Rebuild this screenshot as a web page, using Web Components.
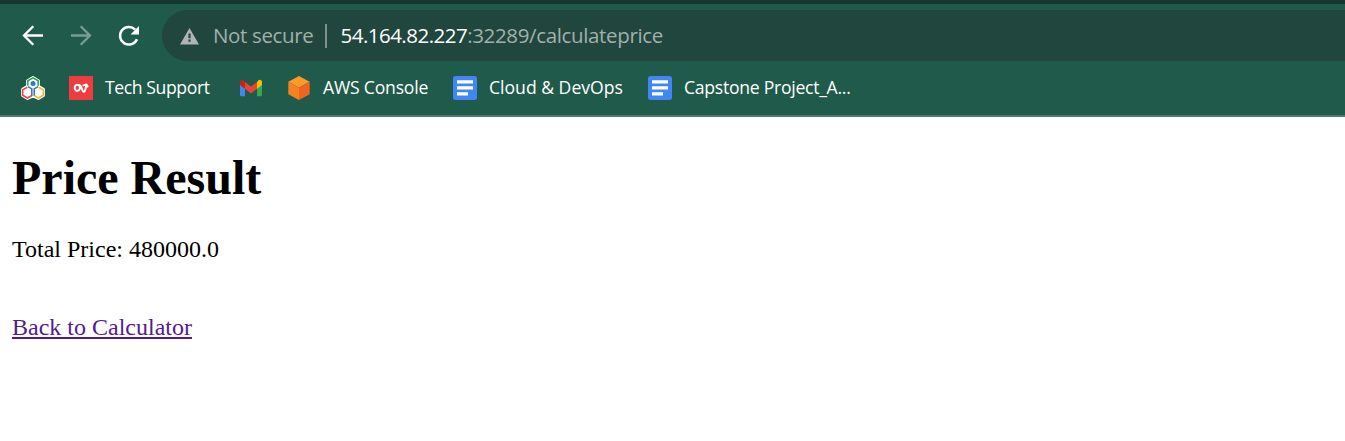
<!DOCTYPE html>
<html lang="en">
<head>
<meta charset="utf-8">
<title>Price Result</title>
<style>
body { margin: 0; background: #fff; overflow: hidden; }
</style>
</head>
<body>
<browser-window>
  <nav-toolbar slot="chrome"></nav-toolbar>
  <bookmark-bar slot="chrome">
    <bookmark-item icon="hex"></bookmark-item>
    <bookmark-item icon="red" style="--w:110px;--ls:-0.4px">Tech Support</bookmark-item>
    <bookmark-item icon="gmail"></bookmark-item>
    <bookmark-item icon="cube" style="--w:106px;--ls:-0.2px">AWS Console</bookmark-item>
    <bookmark-item icon="doc" style="--w:135px;--ls:0px">Cloud &amp; DevOps</bookmark-item>
    <bookmark-item icon="doc" style="--w:170px;--ls:-0.27px">Capstone Project_A...</bookmark-item>
  </bookmark-bar>
  <price-result></price-result>
</browser-window>
<script>
class BrowserWindow extends HTMLElement {
  constructor() {
    super();
    this.attachShadow({ mode: 'open' }).innerHTML = `
      <style>
        :host { display: flex; flex-direction: column; height: 441px; }
        header { box-sizing: border-box; height: 117px; background: #1f5a4a; border-top: 4px solid #15372e; border-bottom: 2px solid #4c7b6e; }
        main { flex: 1; }
      </style>
      <header><slot name="chrome"></slot></header><main><slot></slot></main>`;
  }
}
customElements.define('browser-window', BrowserWindow);

class NavToolbar extends HTMLElement {
  constructor() {
    super();
    this.attachShadow({ mode: 'open' }).innerHTML = `
      <style>
        :host { display: flex; align-items: center; height: 63px; padding-left: 18px; box-sizing: border-box; }
        svg { flex: none; display: block; }
        .nav { width: 30px; height: 30px; margin-right: 18px; }
        .omnibox { flex: 1; display: flex; align-items: center; height: 51px; background: #20463d; border-radius: 26px 0 0 26px; padding-left: 18px; box-sizing: border-box; font: 20.5px/30px "Open Sans", sans-serif; color: #a3b0ac; white-space: pre; letter-spacing: -0.35px; }
        .state, .url { padding-bottom: 2px; }
        .state { width: 100px; margin-left: 14px; }
        .bar { width: 2px; height: 24px; background: #7d918b; margin: 0 13.5px 0 12px; }
        b { font-weight: 400; color: #fff; letter-spacing: -0.52px; }
      </style>
      <svg class="nav" viewBox="0 0 30 30" fill="none" stroke="#fff" stroke-width="2.3"><path d="M25 14.5H6.5M15.3 5.2L6 14.5l9.3 9.3"/></svg>
      <svg class="nav" viewBox="0 0 30 30" fill="none" stroke="#7b9c92" stroke-width="2.3"><path d="M5 14.5h18.5M14.7 5.2l9.3 9.3-9.3 9.3"/></svg>
      <svg class="nav" viewBox="0 0 30 30"><path d="M23 18.2A8.8 8.8 0 1 1 21.2 8.6" fill="none" stroke="#fff" stroke-width="2.5"/><path d="M25 5v8.5h-8.5z" fill="#fff"/></svg>
      <div class="omnibox">
        <svg width="19" height="18" viewBox="0 0 19 18"><path d="M9.5 1L19 17.5H0z" fill="#afb4b6"/><path d="M8.4 6.5h2.2v4.7H8.4zM8.4 12.6h2.2v2.2H8.4z" fill="#20463d"/></svg>
        <div class="state"><span>Not secure</span></div>
        <div class="bar"></div>
        <div class="url"><b>54.164.82.227</b><span>:32289/calculateprice</span></div>
      </div>`;
  }
}
customElements.define('nav-toolbar', NavToolbar);

class BookmarkBar extends HTMLElement {
  constructor() {
    super();
    this.attachShadow({ mode: 'open' }).innerHTML = `
      <style>:host { display: flex; align-items: center; gap: 24px; height: 42px; padding-left: 21px; }</style><slot></slot>`;
  }
}
customElements.define('bookmark-bar', BookmarkBar);

const ICONS = {
  hex: `<path d="M12 1.6l5.4 3.1v5.6l5 3v6.2l-5 2.9-5.4-2.6-5.4 2.6-5-2.9v-6.2l5-3V4.7z" fill="#fff" stroke="#fff" stroke-width="3" stroke-linejoin="round"/>
    <g fill="none" stroke-width="1.6"><path d="M6.8 9.8V4.8l5.2-3 5.2 3v5" stroke="#28a35c"/><path d="M6.3 11.2l-4.6 2.7v5.3l4.8 2.8 4.8-2.8" stroke="#e6474b"/><path d="M17.7 11.2l4.6 2.7v5.3l-4.8 2.8-4.8-2.8" stroke="#f4b63c"/><path d="M7 10.6l3.8 2.3v6.6M17 10.6l-3.8 2.3v6.6" stroke="#3976bd"/><path d="M12 12.8v6" stroke="#8fb3dc" stroke-width="1"/></g><circle cx="12" cy="7.4" r="2.5" fill="#3976bd"/>`,
  red: `<path d="M0 0h24v24H0z" fill="#ee3c41"/><path d="M9.6 9.2C7.2 8.2 5.6 9.8 5.7 12c.1 2.2 1.9 3.1 3.4 2.6 1.9-.6 2.2-2.6 1.5-4.5M10.2 9c1.8.5 2.2 2.4 2.8 4.2.5 1.6 1.1 2.8 2 2.6 1.2-.3 1.5-3.3 2.3-6.4M14.4 9.4l3-1 1.2 2" fill="none" stroke="#fff" stroke-width="2" stroke-linecap="round" stroke-linejoin="round"/>`,
  gmail: `<path d="M1 6h5v14.2H2.5A1.5 1.5 0 0 1 1 18.7z" fill="#4285f4"/><path d="M18 6h5v12.7a1.5 1.5 0 0 1-1.5 1.5H18z" fill="#34a853"/><path d="M6 12.8V5.9l6 4.5 6-4.5v6.9l-6 4.6z" fill="#ea4335"/><path d="M1 9V6.2C1 3.8 3.8 3 5 4.8L6 5.9v6.9z" fill="#c5221f"/><path d="M23 9V6.2C23 3.8 20.2 3 19 4.8l-1 1.1v6.9z" fill="#fbbc04"/>`,
  cube: `<path d="M12 0l10.7 5.7L12 11.8 1.3 5.7z" fill="#fb9a28"/><path d="M1.3 5.7L12 11.8V24L1.3 18.2z" fill="#f58220"/><path d="M22.7 5.7L12 11.8V24l10.7-5.8z" fill="#ee651f"/>`,
  doc: `<rect width="24" height="24" rx="2.2" fill="#4285f4"/><path d="M4 4.3h16v3.2H4zM4 10.3h16v3.2H4zM4 16.3h11v3.2H4z" fill="#fff"/>`
};

class BookmarkItem extends HTMLElement {
  constructor() {
    super();
    this.attachShadow({ mode: 'open' });
  }
  connectedCallback() {
    this.shadowRoot.innerHTML = `
      <style>
        :host { display: flex; align-items: center; gap: 12px; flex: none; height: 24px; font: 17.6px/24px "Open Sans", sans-serif; color: #fff; }
        svg { display: block; flex: none; }
        div { width: var(--w); padding-bottom: 2px; white-space: nowrap; letter-spacing: var(--ls); }
      </style>
      <svg width="24" height="24" viewBox="0 0 24 24">${ICONS[this.getAttribute('icon')]}</svg>${this.hasAttribute('style') ? '<div><slot></slot></div>' : ''}`;
  }
}
customElements.define('bookmark-item', BookmarkItem);

class PriceResult extends HTMLElement {
  constructor() {
    super();
    this.attachShadow({ mode: 'open' }).innerHTML = `
      <style>
        :host { display: block; padding: 33px 12px 0; font: 24px/28px "Liberation Serif", serif; color: #000; }
        h1 { margin: 0 0 30px; font-size: 48px; line-height: 55px; }
        p { margin: 0 0 50px; }
        a { color: #551a8b; text-decoration: underline; }
      </style>
      <h1>Price Result</h1>
      <p>Total Price: 480000.0</p>
      <a href="#">Back to Calculator</a>`;
  }
}
customElements.define('price-result', PriceResult);
</script>
</body>
</html>
